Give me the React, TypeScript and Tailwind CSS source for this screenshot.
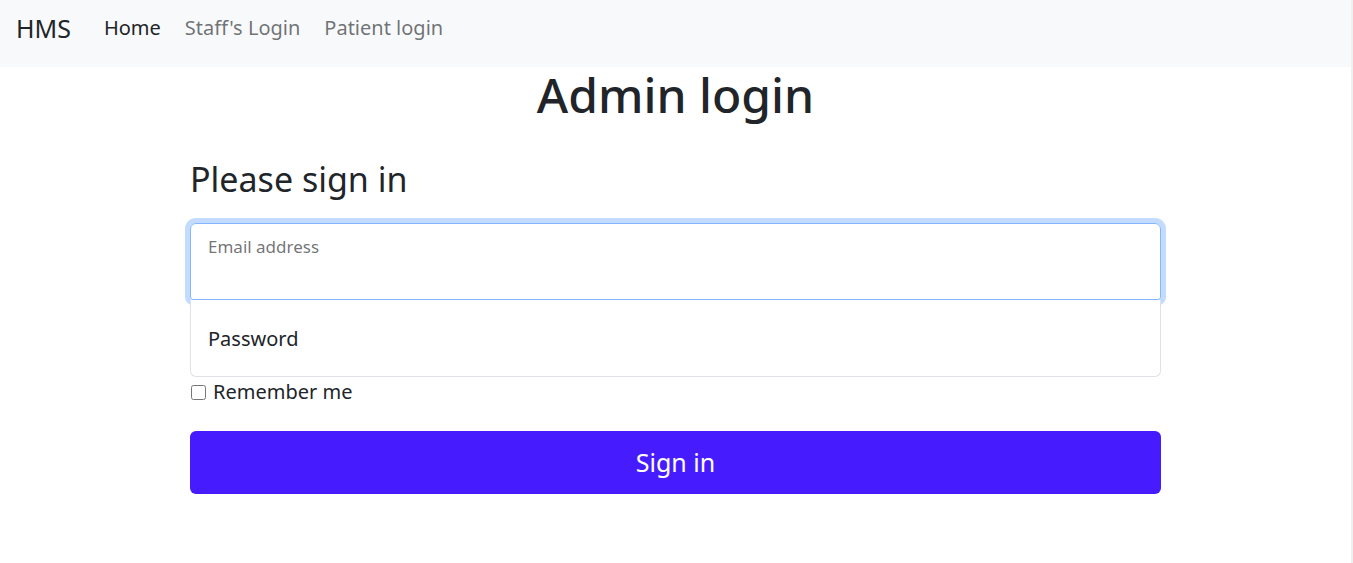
import { useState } from "react";

const font = { fontFamily: '"Noto Sans", "Open Sans", sans-serif' };

function Navbar() {
  return (
    <nav className="flex h-[67px] items-start bg-[#f8f9fa] px-4 pt-[13px]">
      <a href="#" className="mr-[21px] text-[25px] leading-[30px] text-[#212529]">HMS</a>
      <div className="flex items-center">
        <a href="#" className="px-[12px] text-[20px] leading-[30px] text-[#212529]">Home</a>
        <a href="#" className="px-[12px] text-[20px] leading-[30px] text-[#212529a6]">Staff's Login</a>
        <a href="#" className="px-[12px] text-[20px] leading-[30px] text-[#212529a6]">Patient login</a>
      </div>
    </nav>
  );
}

export default function App() {
  const [remember, setRemember] = useState(false);

  return (
    <div className="flex min-h-[563px] bg-white" style={font}>
      <div className="flex-1">
        <Navbar />
        <h1 className="-mt-px text-center text-[48px] font-medium leading-[1.2] text-[#212529]">Admin login</h1>
        <main className="mx-auto mt-[35px] w-[971px]">
          <form onSubmit={(e) => e.preventDefault()}>
            <h2 className="mb-[24px] text-[34px] leading-[1.2] text-[#212529]">Please sign in</h2>
            <div className="relative">
              <input
                type="email"
                className="block h-[77px] w-full rounded-t-md rounded-b-[3px] border border-[#86b7fe] px-[17px] pt-[32px] pb-[8px] text-[20px] text-[#212529] shadow-[0_0_0_5px_rgba(13,110,253,0.25)] outline-none"
              />
              <label className="pointer-events-none absolute left-[18px] top-[11px] text-[17px] text-[#212529a6]">Email address</label>
            </div>
            <div className="relative z-10 bg-white">
              <input
                type="password"
                className="block h-[77px] w-full rounded-b-md border border-t-0 border-[#dee2e6] bg-white px-[17px] text-[20px] text-[#212529] outline-none"
              />
              <label className="pointer-events-none absolute left-[18px] top-[24px] text-[20px] text-[#212529]">Password</label>
            </div>
            <label className="flex items-center gap-[7px] text-[20px] leading-[30px] text-[#212529]">
              <input
                type="checkbox"
                checked={remember}
                onChange={(e) => setRemember(e.target.checked)}
                className="ml-px h-[15px] w-[15px]"
              />
              Remember me
            </label>
            <button
              type="submit"
              className="mt-[24px] block h-[63px] w-full rounded-md bg-[#461cff] text-[25px] text-white"
            >
              Sign in
            </button>
          </form>
        </main>
      </div>
      <div className="w-[2px] bg-[#f0f0f0]" />
    </div>
  );
}
